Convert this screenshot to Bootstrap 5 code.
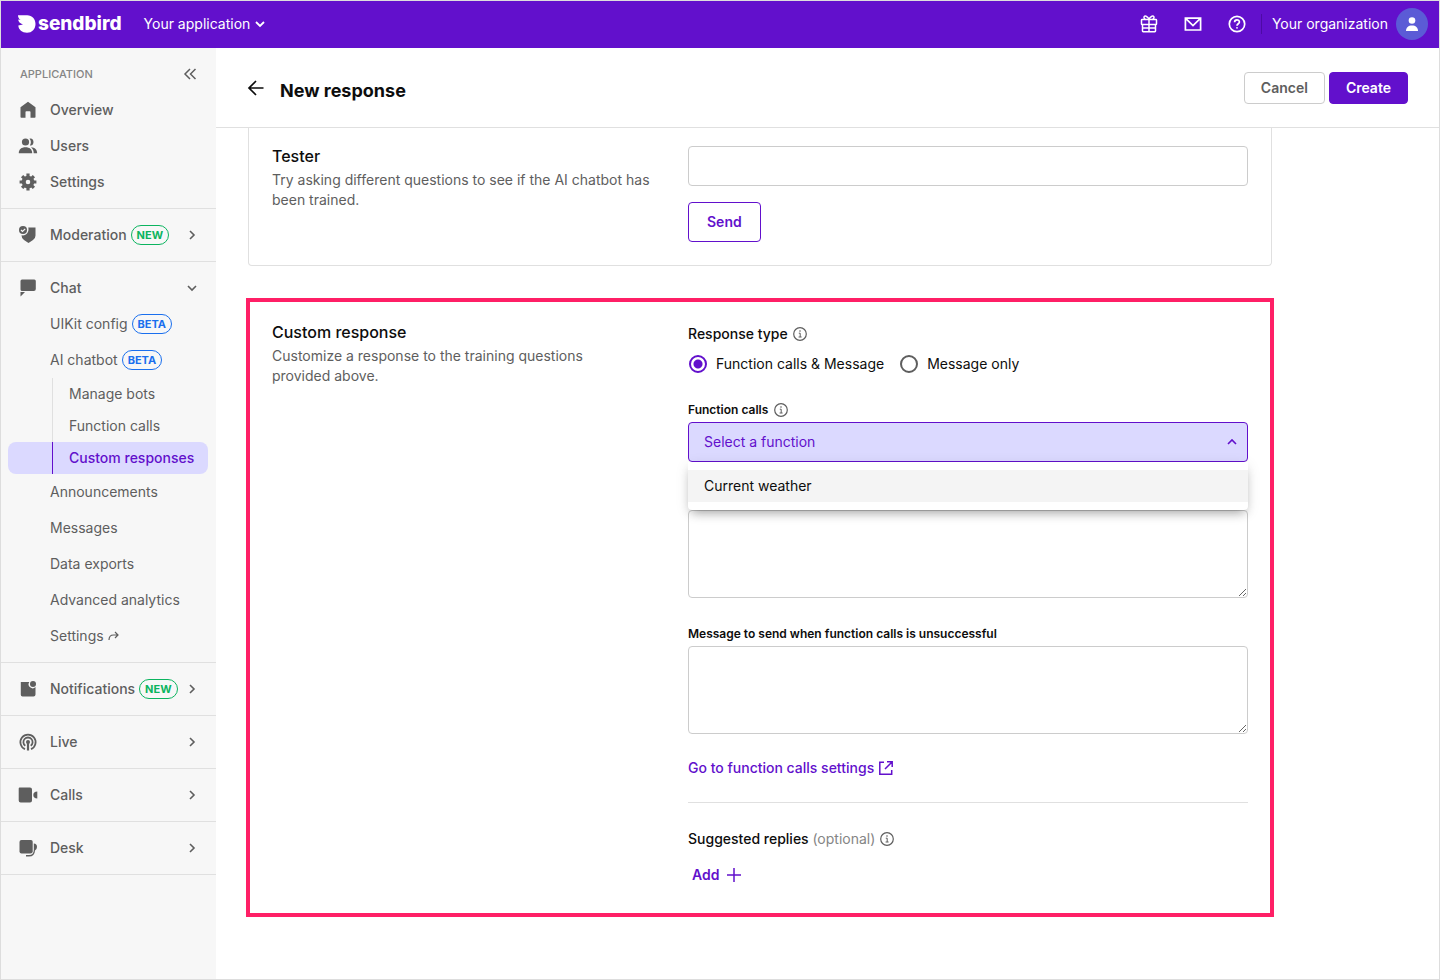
<!DOCTYPE html>
<html lang="en">
<head>
<meta charset="utf-8">
<meta name="viewport" content="width=device-width, initial-scale=1">
<title>New response</title>
<link href="https://cdn.jsdelivr.net/npm/bootstrap@5.3.0/dist/css/bootstrap.min.css" rel="stylesheet">
<style>
:root { --brand: #6210cc; --tint: #dbd9ff; --ink: #0d0d0d; --muted: #5e5e5e; --line: #e0e0e0; --field: #ccc; }
body { font: 400 14px/20px Inter, "Liberation Sans", sans-serif; color: var(--ink); border: 1px solid #ddd; }
svg { display: block; flex: none; }
a { text-decoration: none; }
.topbar { height: 47px; background: var(--brand); padding: 0 11px 1px 17px; }
.topbar a, .topbar button { color: #fff; }
.brand-link-home { gap: 2px; }
.brand-name { font-size: 19px; font-weight: 800; }
.app-switch { margin-left: 22px; }
.divider { width: 1px; height: 20px; background: #4d0aa5; margin: 0 10px 0 14px; }
.avatar { width: 32px; height: 32px; background: #5b5bd6; }
.sidebar { width: 215px; background: #f7f7f7; color: var(--muted); }
.group { padding: 8px 0; border-bottom: 1px solid var(--line); }
.side-row { height: 36px; padding: 0 16px 0 17px; color: var(--muted); font-weight: 500; }
.side-row .label { margin: 0 4px 0 12px; }
.side-row.child { padding-left: 49px; font-weight: 400; gap: 4px; }
.caption { font-size: 11px; color: #858585; margin-left: 2px; }
.pill { height: 20px; line-height: 18px; padding: 0 5px; border: 1px solid; border-radius: 10px; font-size: 11px; font-weight: 700; }
.pill.new { color: #0bb45f; }
.pill.beta { color: #1a6fee; }
.sub { margin: 0 8px 0 7px; padding-left: 44px; height: 32px; border-radius: 8px; }
.sub a { display: block; line-height: 32px; padding-left: 16px; color: var(--muted); border-left: 1px solid var(--line); }
.sub.active { background: var(--tint); }
.sub.active a { color: var(--brand); border-color: var(--brand); font-weight: 500; }
.page-head { height: 80px; padding: 0 31px 0 30px; border-bottom: 1px solid var(--line); }
.page-head h1 { font-size: 18px; line-height: 24px; font-weight: 700; padding-top: 6px; margin: 0 0 0 14px; }
.btn { --bs-btn-font-size: 14px; --bs-btn-line-height: 20px; --bs-btn-font-weight: 600; --bs-btn-border-radius: 4px; --bs-btn-padding-y: 5px; --bs-btn-padding-x: 16px; }
.btn-brand { --bs-btn-color: #fff; --bs-btn-bg: var(--brand); --bs-btn-border-color: var(--brand); }
.btn-plain { --bs-btn-color: #5e5e5e; --bs-btn-bg: #fff; --bs-btn-border-color: #ccc; }
.btn-line { --bs-btn-color: var(--brand); --bs-btn-border-color: var(--brand); --bs-btn-padding-y: 9px; --bs-btn-padding-x: 18px; }
.content { max-width: 1088px; padding: 0 30px 32px; }
.split { display: grid; grid-template-columns: 5fr 7fr; column-gap: 16px; }
.panel { margin: 0 2px 32px; padding: 18px 23px 23px; border: 1px solid var(--line); border-top: 0; border-radius: 0 0 4px 4px; }
.focus-panel { padding: 20px 22px 28px; border: 4px solid #ff1f66; }
.split h2 { font-size: 16px; line-height: 20px; font-weight: 500; margin-bottom: 4px; }
.split p { color: var(--muted); max-width: 384px; margin: 0; }
.focus-panel p { max-width: 360px; }
.form-control, .form-select { font-size: 14px; line-height: 20px; border-color: var(--field); border-radius: 4px; padding: 9px 15px; }
textarea.form-control { height: 88px; }
.field { margin-bottom: 26px; }
.field.last { margin-bottom: 24px; }
.field.covered { padding-top: 22px; }
.field-head { display: flex; align-items: center; gap: 6px; font-size: 12px; font-weight: 600; margin-bottom: 2px; }
.title-row { display: flex; align-items: center; gap: 5px; min-height: 24px; font-weight: 500; }
.form-select.open { color: var(--brand); border-color: var(--brand); background-color: var(--tint); background-position: right 10px center; background-size: 10px 10px;
  background-image: url("data:image/svg+xml,%3Csvg xmlns='http://www.w3.org/2000/svg' viewBox='0 0 10 10'%3E%3Cpath d='M1 7l4-4 4 4' fill='none' stroke='%236210cc' stroke-width='1.6'/%3E%3C/svg%3E"); }
.options { --bs-dropdown-font-size: 14px; top: 100%; margin: 0; padding: 8px 0; border: 0; border-radius: 0 0 4px 4px; box-shadow: 0 6px 10px -4px rgba(0,0,0,.32), 0 3px 14px rgba(0,0,0,.1); }
.options .dropdown-item { padding: 6px 16px; line-height: 20px; color: var(--ink); background: #f4f4f4; }
.choices { padding: 8px 0 0 1px; column-gap: 16px; }
.choice { gap: 9px; }
.choice .form-check-input { width: 18px; height: 18px; margin: 0; border: 2px solid var(--muted); }
.choice .form-check-input:checked { border-color: var(--brand); background-color: #fff; background-image: radial-gradient(circle, var(--brand) 4px, transparent 5px); }
.rule { height: 1px; margin: 24px 0; border: 0; opacity: 1; background: var(--line); }
.settings-link { display: flex; width: max-content; color: var(--brand); font-weight: 500; gap: 5px; }
.optional { color: #858585; font-weight: 400; }
.add-btn { color: var(--brand); font-weight: 600; gap: 6px; margin-top: 14px; padding: 0 4px; }
</style>
</head>
<body class="min-vh-100 d-flex flex-column">
<svg class="d-none">
  <symbol id="right" viewBox="0 0 20 20"><path d="M8 6l4 4-4 4" fill="none" stroke="currentColor" stroke-width="1.6"/></symbol>
  <symbol id="down" viewBox="0 0 20 20"><path d="M6 8l4 4 4-4" fill="none" stroke="currentColor" stroke-width="1.6"/></symbol>
  <symbol id="info" viewBox="0 0 14 14"><circle cx="7" cy="7" r="6.3" fill="none" stroke="#5e5e5e" stroke-width="1.2"/><path d="M5.8 6.2H7.2V10M5.600 10H8.600" fill="none" stroke="#5e5e5e"/><circle cx="7" cy="4" r=".8" fill="#5e5e5e"/></symbol>
</svg>
<header class="topbar d-flex align-items-center">
  <a href="#" class="brand-link-home d-flex align-items-center">
    <svg width="18" height="20" viewBox="0 0 18 20" fill="#fff"><path d="M0 1.200H9.200C14 1.200 17.500 5 17.500 10c0 5-3.500 8.800-8.500 8.800-5 0-8.400-3-8.700-7.200L5 10.400C2 9.600 .3 7.800 .2 5.600L2.600 6C1 5 0 3.200 0 1.200z"/></svg>
    <span class="brand-name">sendbird</span>
  </a>
  <button type="button" class="app-switch border-0 bg-transparent p-0 d-flex align-items-center">Your application<svg width="20" height="20"><path d="M6 8l4 4 4-4" fill="none" stroke="#fff" stroke-width="1.8"/></svg></button>
  <nav class="ms-auto d-flex align-items-center gap-4">
    <a href="#" aria-label="What's new"><svg width="20" height="20" fill="none" stroke="#fff" stroke-width="1.5"><rect x="2.500" y="5.500" width="15" height="5" rx=".6"/><path d="M3.500 10.500v6.600q0 .6.600.6h11.800q.6 0 .6-.6V10.500M10 5.500V17.700M3 14h14M10 5.500C9 2 5 .8 5 3.500q0 1.500 1.500 2M10 5.500C11 2 15 .8 15 3.500q0 1.500-1.500 2"/></svg></a>
    <a href="#" aria-label="Messages"><svg width="20" height="20" fill="none" stroke="#fff" stroke-width="1.7"><path d="M2.400 4.200H17.600V16H2.400ZM2.600 4.400L10 11.500L17.400 4.400"/></svg></a>
    <a href="#" aria-label="Help"><svg width="20" height="20" fill="none" stroke="#fff" stroke-width="1.700"><circle cx="10" cy="10" r="7.700"/><path d="M7.600 8.300C7.600 5 12.400 5.200 12.400 8 12.400 9.800 10 9.800 10 11.800"/><circle cx="10" cy="13.800" r=".9" fill="#fff" stroke="none"/></svg></a>
  </nav>
  <span class="divider"></span>
  <a href="#" class="d-flex align-items-center gap-2">Your organization
    <span class="avatar rounded-circle d-flex align-items-center justify-content-center"><svg width="14" height="16" fill="#fff"><circle cx="7" cy="4.500" r="3.300"/><path d="M1 15c0-3.600 2.300-5.600 6-5.600s6 2 6 5.600z"/></svg></span></a>
</header>

<div class="d-flex flex-grow-1">
  <nav class="sidebar flex-shrink-0">
    <div class="group">
      <div class="side-row d-flex align-items-center justify-content-between"><span class="caption">APPLICATION</span>
        <button type="button" class="border-0 bg-transparent p-0" aria-label="Collapse"><svg width="20" height="20" fill="none" stroke="#5e5e5e" stroke-width="1.500"><path d="M10 5L5 10L10 15M15.500 5L10.500 10L15.500 15"/></svg></button></div>
      <a href="#" class="side-row d-flex align-items-center"><svg width="20" height="20" fill="currentColor"><path d="M10 1.700L17.500 7.300V17q0 .8-.8.800H12.500V12q0-.8-.8-.8H8.300q-.8 0-.8.800v5.800H3.300q-.8 0-.8-.8V7.300z"/></svg><span class="label">Overview</span></a>
      <a href="#" class="side-row d-flex align-items-center"><svg width="20" height="20" fill="currentColor"><circle cx="7.500" cy="6" r="3.600"/><path d="M.8 17.200c0-4 2.700-6 6.700-6s6.700 2 6.700 6zM11.500 2.600c5.300-1.300 5.300 8 .4 6.800 1.400-2 1.400-4.800-.4-6.800zM13 11.300c4 .3 6 2.300 6.200 5.900h-3.500c0-2.500-.9-4.500-2.700-5.900z"/></svg><span class="label">Users</span></a>
      <a href="#" class="side-row d-flex align-items-center"><svg width="20" height="20"><circle cx="10" cy="10" r="4.300" fill="none" stroke="currentColor" stroke-width="4"/><g stroke="currentColor" stroke-width="3.200"><path d="M10 1.600V5M10 15v3.400M1.600 10H5M15 10h3.400M4.100 4.100l2 2M13.900 13.900l2 2M4.100 15.900l2-2M13.900 6.100l2-2"/></g></svg><span class="label">Settings</span></a>
    </div>
    <div class="group"><a href="#" class="side-row d-flex align-items-center"><svg width="20" height="20" fill="currentColor"><path d="M10.300 2.500H17.500V10.500Q17.500 13.500 15 15L10.500 18 6 15Q3.500 13.500 3.500 10.300C8 11.300 11.500 7 10.300 2.500z"/><circle cx="5" cy="5" r="4"/><path d="M3 5l1.500 1.500L7.200 3.800" fill="none" stroke="#f7f7f7" stroke-width="1.200"/></svg><span class="label">Moderation</span><span class="pill new">NEW</span><svg class="ms-auto" width="16" height="20" viewBox="2 0 16 20"><use href="#right" width="20" height="20"/></svg></a></div>
    <div class="group">
      <a href="#" class="side-row d-flex align-items-center"><svg width="20" height="20" fill="currentColor"><path d="M4 1.500H16.300q1.500 0 1.500 1.500v8q0 2-2 2H4q-1.500 0-1.500-1.500V3q0-1.500 1.500-1.500zM2.500 14H7L2.500 18.500z"/></svg><span class="label">Chat</span><svg class="ms-auto" width="16" height="20" viewBox="2 0 16 20"><use href="#down" width="20" height="20"/></svg></a>
      <a href="#" class="side-row child d-flex align-items-center">UIKit config<span class="pill beta">BETA</span></a>
      <a href="#" class="side-row child d-flex align-items-center">AI chatbot<span class="pill beta">BETA</span></a>
      <div class="sub"><a href="#">Manage bots</a></div>
      <div class="sub"><a href="#">Function calls</a></div>
      <div class="sub active"><a href="#">Custom responses</a></div>
      <a href="#" class="side-row child d-flex align-items-center">Announcements</a>
      <a href="#" class="side-row child d-flex align-items-center">Messages</a>
      <a href="#" class="side-row child d-flex align-items-center">Data exports</a>
      <a href="#" class="side-row child d-flex align-items-center">Advanced analytics</a>
      <a href="#" class="side-row child d-flex align-items-center">Settings<svg width="11" height="10" fill="none" stroke="currentColor" stroke-width="1.200"><path d="M1 9Q1 4 5.500 4H9.500M7 1l3 3-3 3"/></svg></a>
    </div>
    <div class="group"><a href="#" class="side-row d-flex align-items-center"><svg width="20" height="20" fill="currentColor"><path d="M3 3h8.300a4 4 0 0 0 6.200 5V15.500q0 2-2 2h-11q-1.700 0-1.700-1.700V3z"/><circle cx="15" cy="5" r="3"/></svg><span class="label">Notifications</span><span class="pill new">NEW</span><svg class="ms-auto" width="16" height="20" viewBox="2 0 16 20"><use href="#right" width="20" height="20"/></svg></a></div>
    <div class="group"><a href="#" class="side-row d-flex align-items-center"><svg width="20" height="20" fill="none" stroke="currentColor" stroke-width="1.800"><path d="M7 17.200a7.600 7.600 0 1 1 6 0M7.300 13.800a4.600 4.600 0 1 1 5.400 0"/><circle cx="10" cy="10" r="2" fill="currentColor" stroke="none"/><path d="M10 10v8.500" stroke-width="2.200"/></svg><span class="label">Live</span><svg class="ms-auto" width="16" height="20" viewBox="2 0 16 20"><use href="#right" width="20" height="20"/></svg></a></div>
    <div class="group"><a href="#" class="side-row d-flex align-items-center"><svg width="20" height="20" fill="currentColor"><path d="M1.700 2.500H12q2 0 2 2v11q0 2-2 2H2.700q-2 0-2-2v-12q0-1 1-1zM19.300 6.500v7q-4-.3-4-3.500t4-3.500z"/></svg><span class="label">Calls</span><svg class="ms-auto" width="16" height="20" viewBox="2 0 16 20"><use href="#right" width="20" height="20"/></svg></a></div>
    <div class="group"><a href="#" class="side-row d-flex align-items-center"><svg width="20" height="20" fill="currentColor"><path d="M3.500 2H13q1.700 0 1.700 1.700v9.500q0 2.300-2.300 2.300H3.500q-2 0-2-2V4q0-2 2-2z"/><path d="M15.800 5.500q3.200 0 3.200 3.500-.2 3-2 3.500-.3 6-6 6H8v-1.600h3q4.800 0 4.800-5z"/></svg><span class="label">Desk</span><svg class="ms-auto" width="16" height="20" viewBox="2 0 16 20"><use href="#right" width="20" height="20"/></svg></a></div>
  </nav>

  <main class="flex-grow-1">
    <div class="page-head d-flex align-items-center">
      <a href="#" aria-label="Back"><svg width="20" height="20" fill="none" stroke="#0d0d0d" stroke-width="1.700"><path d="M17.500 10H3.200M10 3L3 10l7 7"/></svg></a>
      <h1>New response</h1>
      <div class="ms-auto d-flex gap-1"><button type="button" class="btn btn-plain">Cancel</button><button type="button" class="btn btn-brand">Create</button></div>
    </div>
    <div class="content">
      <section class="panel split">
        <div><h2><label for="ask">Tester</label></h2><p>Try asking different questions to see if the AI chatbot has been trained.</p></div>
        <div class="d-flex flex-column align-items-start gap-3"><input id="ask" type="text" class="form-control"><button type="button" class="btn btn-line">Send</button></div>
      </section>
      <section class="focus-panel split">
        <div><h2>Custom response</h2><p>Customize a response to the training questions provided above.</p></div>
        <div>
          <div class="title-row"><span id="type-title">Response type</span><svg width="14" height="14"><use href="#info" width="14" height="14"/></svg></div>
          <div class="choices field d-flex" role="radiogroup" aria-labelledby="type-title">
            <div class="choice d-flex align-items-center"><input class="form-check-input" type="radio" name="type" id="both" checked><label for="both">Function calls &amp; Message</label></div>
            <div class="choice d-flex align-items-center"><input class="form-check-input" type="radio" name="type" id="only"><label for="only">Message only</label></div>
          </div>
          <div class="field">
            <div class="field-head"><label for="fn">Function calls</label><svg width="14" height="14"><use href="#info" width="14" height="14"/></svg></div>
            <div class="position-relative">
              <select id="fn" class="form-select open"><option>Select a function</option></select>
              <ul class="options dropdown-menu show w-100"><li><button type="button" class="dropdown-item">Current weather</button></li></ul>
            </div>
          </div>
          <div class="field covered">
            <textarea id="ok" class="form-control" aria-label="Message"></textarea>
          </div>
          <div class="field last">
            <div class="field-head"><label for="fail">Message to send when function calls is unsuccessful</label></div>
            <textarea id="fail" class="form-control"></textarea>
          </div>
          <a href="#" class="settings-link align-items-center">Go to function calls settings<svg width="14" height="14" fill="none" stroke="currentColor" stroke-width="1.500"><path d="M5 1.300H.800V13.200H12.700V9M8 .8H13.200V6M13 1L6 8"/></svg></a>
          <hr class="rule">
          <div class="title-row"><span>Suggested replies <span class="optional">(optional)</span></span><svg width="14" height="14"><use href="#info" width="14" height="14"/></svg></div>
          <button type="button" class="add-btn border-0 bg-transparent d-flex align-items-center">Add<svg width="18" height="18" fill="none" stroke="currentColor" stroke-width="1.500"><path d="M9 2v14M2 9h14"/></svg></button>
        </div>
      </section>
    </div>
  </main>
</div>
<script src="https://cdn.jsdelivr.net/npm/bootstrap@5.3.0/dist/js/bootstrap.bundle.min.js"></script>
</body>
</html>
